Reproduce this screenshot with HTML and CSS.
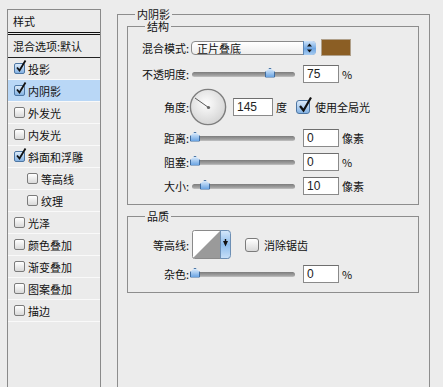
FILE: index.html
```html
<!DOCTYPE html>
<html lang="zh-CN">
<head>
  <meta charset="UTF-8" />
  <title>图层样式</title>
  <link rel="stylesheet" href="styles.css">
</head>
<body>

  <div class="dialog">
    <ul class="styles">
      <li class="head">样式</li>
      <li class="blend">混合选项:默认</li>
      <li><span class="cb on"><svg width="12" height="14" viewBox="0 0 12 14"><path d="M2 8.5 L4.5 11.5 L10.5 1.5" fill="none" stroke="#111" stroke-width="1.8"/></svg></span>投影</li>
      <li class="active"><span class="cb on"><svg width="12" height="14" viewBox="0 0 12 14"><path d="M2 8.5 L4.5 11.5 L10.5 1.5" fill="none" stroke="#111" stroke-width="1.8"/></svg></span>内阴影</li>
      <li><span class="cb"></span>外发光</li>
      <li><span class="cb"></span>内发光</li>
      <li><span class="cb on"><svg width="12" height="14" viewBox="0 0 12 14"><path d="M2 8.5 L4.5 11.5 L10.5 1.5" fill="none" stroke="#111" stroke-width="1.8"/></svg></span>斜面和浮雕</li>
      <li class="sub"><span class="cb"></span>等高线</li>
      <li class="sub"><span class="cb"></span>纹理</li>
      <li><span class="cb"></span>光泽</li>
      <li><span class="cb"></span>颜色叠加</li>
      <li><span class="cb"></span>渐变叠加</li>
      <li><span class="cb"></span>图案叠加</li>
      <li><span class="cb"></span>描边</li>
    </ul>

    <fieldset class="group outer">
      <legend>内阴影</legend>

      <fieldset class="group">
        <legend>结构</legend>
        <div class="fields">
          <div class="row mode">
            <label>混合模式:</label>
            <div class="select">正片叠底
              <span class="stepper">
                <svg width="13" height="14" viewBox="0 0 13 14"><path d="M4 5.5 L6.5 2.5 L9 5.5 Z M4 8.5 L6.5 11.5 L9 8.5 Z" fill="#111"/></svg>
              </span>
            </div>
            <span class="swatch"></span>
          </div>

          <div class="row opacity">
            <label>不透明度:</label>
            <div class="slider"><div class="track"><span class="thumb" style="left: 73px"></span></div></div>
            <input class="num" type="text" value="75">
            <span class="unit">%</span>
          </div>

          <div class="row angle">
            <label>角度:</label>
            <svg class="dial" width="38" height="38" viewBox="0 0 38 38">
              <defs>
                <radialGradient id="dialFill" cx="45%" cy="40%" r="65%">
                  <stop offset="0" stop-color="#fdfdfd"/>
                  <stop offset="1" stop-color="#d2d2d2"/>
                </radialGradient>
              </defs>
              <circle cx="19" cy="19" r="17.6" fill="url(#dialFill)" stroke="#7e7e7e" stroke-width="1.4"/>
              <line x1="19.5" y1="19.5" x2="6" y2="10" stroke="#5a5a5a" stroke-width="1"/>
              <circle cx="19.5" cy="19.5" r="1.6" fill="#666"/>
            </svg>
            <input class="num wide" type="text" value="145">
            <span class="unit">度</span>
            <span class="cb big on"><svg width="16" height="18" viewBox="0 0 16 18"><path d="M3 10 L6.5 14.5 L14 1.5" fill="none" stroke="#111" stroke-width="2.2"/></svg></span>
            <span class="check-label">使用全局光</span>
          </div>

          <div class="row">
            <label>距离:</label>
            <div class="slider"><div class="track"><span class="thumb" style="left: -2px"></span></div></div>
            <input class="num" type="text" value="0">
            <span class="unit">像素</span>
          </div>

          <div class="row">
            <label>阻塞:</label>
            <div class="slider"><div class="track"><span class="thumb" style="left: -2px"></span></div></div>
            <input class="num" type="text" value="0">
            <span class="unit">%</span>
          </div>

          <div class="row">
            <label>大小:</label>
            <div class="slider"><div class="track"><span class="thumb" style="left: 8px"></span></div></div>
            <input class="num" type="text" value="10">
            <span class="unit">像素</span>
          </div>
        </div>
      </fieldset>

      <fieldset class="group quality">
        <legend>品质</legend>
        <div class="fields">
          <div class="row contour-row">
            <label>等高线:</label>
            <svg class="contour" width="39" height="29" viewBox="0 0 39 29">
              <defs>
                <linearGradient id="dropFill" x1="0" y1="0" x2="0" y2="1">
                  <stop offset="0" stop-color="#d6e8fb"/>
                  <stop offset="0.5" stop-color="#8dbcec"/>
                  <stop offset="1" stop-color="#c8e0f8"/>
                </linearGradient>
              </defs>
              <rect x="0.5" y="0.5" width="37" height="28" rx="2" fill="#fff" stroke="#8a8a8a"/>
              <polygon points="1,28 28,1 28,28" fill="#9a9a9a"/>
              <path d="M28.5 0.5 H35.5 Q38.5 0.5 38.5 3.5 V25.5 Q38.5 28.5 35.5 28.5 H28.5 Z" fill="url(#dropFill)" stroke="#6d8fb4"/>
              <path d="M31 11 H36 L33.5 16.5 Z M32.8 9 H34.2 V11 H32.8 Z" fill="#111"/>
            </svg>
            <span class="cb big"></span>
            <span class="check-label">消除锯齿</span>
          </div>

          <div class="row">
            <label>杂色:</label>
            <div class="slider"><div class="track"><span class="thumb" style="left: -2px"></span></div></div>
            <input class="num" type="text" value="0">
            <span class="unit">%</span>
          </div>
        </div>
      </fieldset>
    </fieldset>
  </div>

</body>
</html>
```

FILE: styles.css
```css
body {
  margin: 0;
  height: 387px;
  overflow: hidden;
  background: #ececec;
  font-family: "Noto Sans CJK SC", "Liberation Sans", sans-serif;
  font-size: 11px;
  color: #111;
}

.dialog {
  display: flex;
  align-items: flex-start;
  gap: 16px;
  padding: 8px 0 0 7px;
}

/* left list of styles, runs off the bottom of the window */
.styles {
  list-style: none;
  margin: 1px 0 0;
  padding: 0;
  width: 92px;
  height: 377px;
  border: 1px solid #8a8a8a;
  border-bottom: 0;
  background: #ebebeb;
  flex: none;
}

.styles li {
  display: flex;
  align-items: center;
  gap: 3px;
  height: 21px;
  padding-left: 6px;
  border-bottom: 1px solid #f9f9f9;
}

.styles .head {
  height: 22px;
  padding-left: 5px;
  border-bottom: 3px double #111;
}

.styles .blend {
  height: 22px;
  padding-left: 5px;
  border-bottom: 1px solid #222;
}

.styles .sub {
  padding-left: 19px;
}

.styles .active {
  background: #b9d7f6;
}

/* checkboxes */
.cb {
  position: relative;
  flex: none;
  width: 9px;
  height: 9px;
  border: 1px solid #7b7b7b;
  border-radius: 2px;
  background: linear-gradient(#ffffff, #d9d9d9);
}

.cb svg {
  position: absolute;
  left: 0;
  top: -5px;
}

.cb.on {
  border-color: #4d76a3;
  background: linear-gradient(#dcebfa, #84b2e3);
}

.cb.big {
  width: 12px;
  height: 12px;
  border-radius: 3px;
}

/* group boxes */
.group {
  margin: 0;
  padding: 8px 8px 9px;
  border: 1px solid #8d8d8d;
  min-width: 0;
}

.group legend {
  padding: 0 2px;
  margin-left: 9px;
  line-height: 12px;
}

.outer {
  box-sizing: border-box;
  width: 313px;
  height: 379px;
  padding: 0 10px 0 9px;
  border-bottom: 0;
  flex: none;
}

.outer > legend {
  margin-left: 8px;
}

.quality {
  margin-top: 5px;
}

.fields {
  display: flex;
  flex-direction: column;
  gap: 6px;
}

.row {
  display: flex;
  align-items: center;
  height: 18px;
}

.row label {
  width: 53px;
  flex: none;
  margin-right: 3px;
  text-align: right;
}

.row.mode {
  height: 15px;
  margin-bottom: 4px;
}

.row.opacity {
  margin-bottom: -1px;
}

.row.angle {
  height: 37px;
  margin-bottom: -2px;
}

.row.contour-row {
  height: 29px;
}

/* blend mode popup */
.select {
  position: relative;
  width: 118px;
  height: 12px;
  line-height: 12px;
  margin-left: -1px;
  padding-left: 5px;
  border: 1px solid #8a8a8a;
  border-radius: 4px;
  background: linear-gradient(#ffffff, #ededed);
}

.stepper {
  position: absolute;
  right: -1px;
  top: -1px;
  width: 13px;
  height: 14px;
  border-radius: 0 4px 4px 0;
  background: linear-gradient(#cfe4fa, #6fa6e2 55%, #a9cdf2);
  box-shadow: inset 1px 0 0 #5d87b5;
}

.stepper svg {
  display: block;
}

.swatch {
  width: 28px;
  height: 15px;
  margin-left: 6px;
  background: #8b5e24;
  box-shadow: 0 0 0 1px #b0a08a;
}

/* sliders */
.slider {
  width: 103px;
  flex: none;
}

.track {
  position: relative;
  height: 5px;
  border-radius: 3px;
  background: linear-gradient(#7c7c7c, #a3a3a3 70%, #c4c4c4);
}

.thumb {
  position: absolute;
  top: -4px;
  width: 10px;
  height: 10px;
  background: linear-gradient(#d9eafb, #6aa4e3);
  border: 1px solid #3f6c9f;
  border-radius: 2px 2px 1px 1px;
  box-sizing: border-box;
  clip-path: polygon(50% 0, 100% 45%, 100% 100%, 0 100%, 0 45%);
}

/* number fields */
.num {
  box-sizing: border-box;
  width: 36px;
  height: 18px;
  margin: 0 0 0 8px;
  padding: 0 0 0 3px;
  border: 1px solid #8a8a8a;
  border-top-color: #6e6e6e;
  background: #fff;
  font-family: "Liberation Sans", sans-serif;
  font-size: 12px;
  color: #222;
  outline: none;
}

.num.wide {
  width: 40px;
  margin-left: 6px;
}

.unit {
  margin-left: 3px;
}

.dial {
  margin-left: -3px;
  flex: none;
}

.angle .cb.big {
  margin-left: 9px;
}

.check-label {
  margin-left: 5px;
}

.contour {
  flex: none;
}

.contour-row .cb.big {
  margin-left: 14px;
}
```
